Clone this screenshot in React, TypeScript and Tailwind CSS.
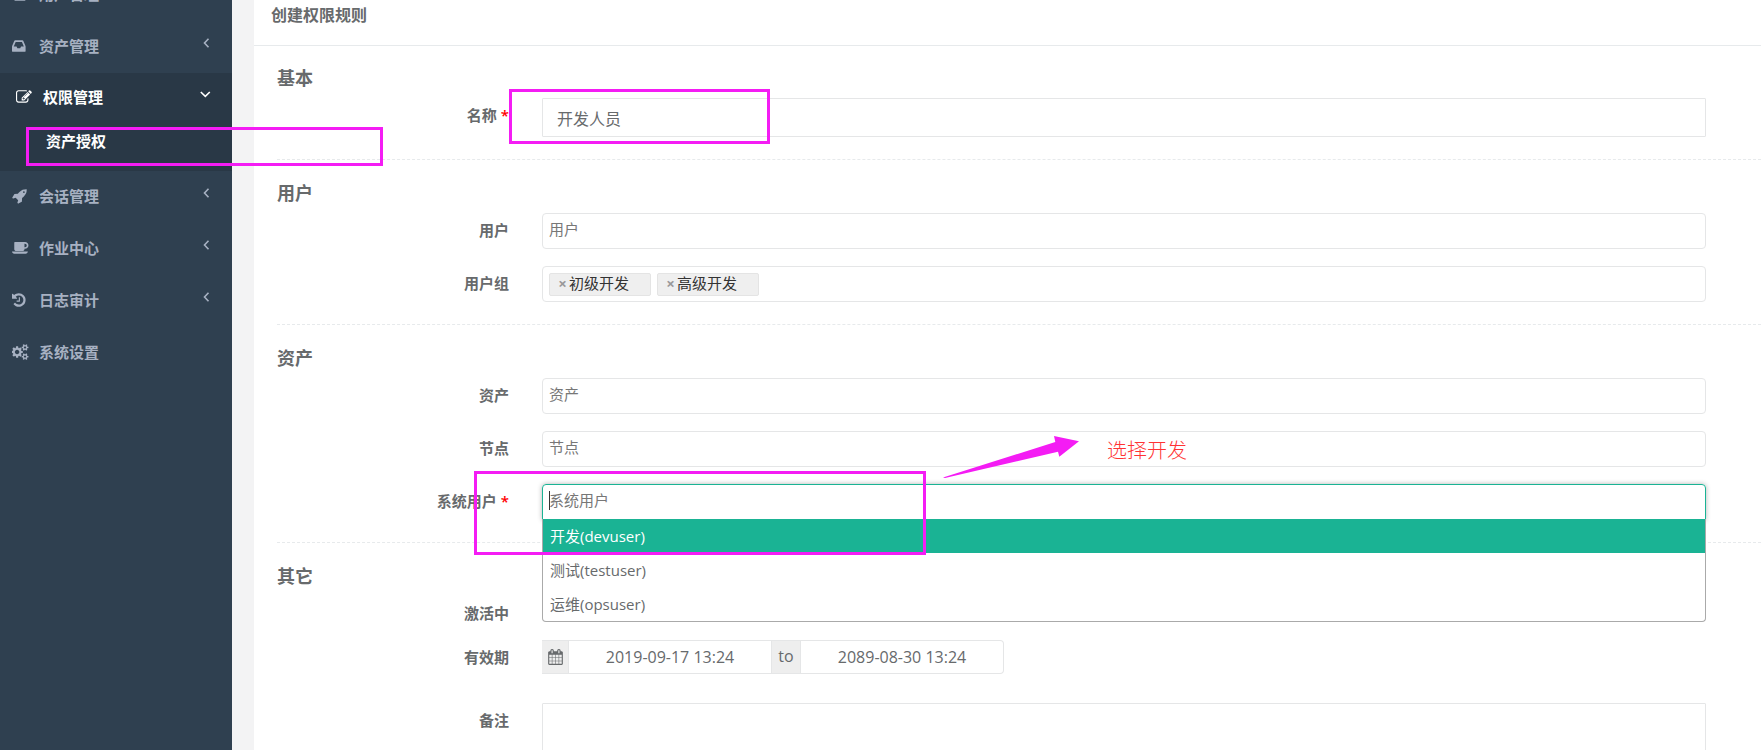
import type { ReactNode } from 'react';

const icons = {
  user: 'M1600 1405q0 120-73 189.500t-194 69.500h-874q-121 0-194-69.500t-73-189.500q0-53 3.500-103.500t14-109 26.500-108.500 43-97.500 62-81 85.500-53.500 111.500-20q9 0 42 21.500t74.500 48 108 48 133.500 21.500 133.500-21.500 108-48 74.500-48 42-21.500q61 0 111.500 20t85.500 53.500 62 81 43 97.500 26.500 108.500 14 109 3.500 103.500z',
  inbox: 'M1151 960h316q-1-3-2.500-8.500t-2.500-7.500l-212-496h-708l-212 496q-1 3-2.500 8.500t-2.500 7.500h316l95 192h320zm513 30v482q0 26-19 45t-45 19h-1408q-26 0-45-19t-19-45v-482q0-62 25-123l238-552q10-25 36.500-42t52.500-17h832q26 0 52.500 17t36.500 42l238 552q25 61 25 123z',
  edit: 'M888 1184l116-116-152-152-116 116v56h96v96h56zm440-720q-16-16-33 1l-350 350q-17 17-1 33t33-1l350-350q17-17 1-33zm80 594v190q0 119-84.500 203.500t-203.500 84.500h-832q-119 0-203.500-84.500t-84.500-203.500v-832q0-119 84.500-203.500t203.500-84.500h832q63 0 117 25 15 7 18 23 3 17-9 29l-49 49q-14 14-32 8-23-6-45-6h-832q-66 0-113 47t-47 113v832q0 66 47 113t113 47h832q66 0 113-47t47-113v-126q0-13 9-22l64-64q15-15 35-7t20 29zm-96-738l288 288-672 672h-288v-288zm444 132l-92 92-288-288 92-92q28-28 68-28t68 28l152 152q28 28 28 68t-28 68z',
  rocket: 'M1440 448q0-40-28-68t-68-28-68 28-28 68 28 68 68 28 68-28 28-68zm224-288q0 249-75.500 430.500t-253.500 360.500q-81 80-195 176l-20 379q-2 16-16 26l-384 224q-7 4-16 4-12 0-23-9l-64-64q-13-14-8-32l85-276-281-281-276 85q-3 1-9 1-14 0-23-9l-64-64q-17-19-5-39l224-384q10-14 26-16l379-20q96-114 176-195 188-187 358-258t431-71q14 0 24 9.500t10 22.500z',
  coffee: 'M1664 608q0-80-56-136t-136-56h-64v384h64q80 0 136-56t56-136zm-1664 672h1792q0 106-75 181t-181 75h-1280q-106 0-181-75t-75-181zm1856-672q0 159-112.500 271.500t-271.500 112.500h-64v32q0 92-66 158t-158 66h-704q-92 0-158-66t-66-158v-736q0-26 19-45t45-19h1152q159 0 271.500 112.500t112.500 271.500z',
  history: 'M1664 896q0 156-61 298t-164 245-245 164-298 61q-172 0-327-72.500t-264-204.500q-7-10-6.500-22.500t8.500-20.500l137-138q10-9 25-9 16 2 23 12 73 95 179 147t225 52q104 0 198.500-40.500t163.500-109.500 109.500-163.500 40.500-198.500-40.500-198.500-109.500-163.500-163.500-109.500-198.500-40.500q-98 0-188 35.500t-160 101.500l137 138q31 30 14 69-17 40-59 40h-448q-26 0-45-19t-19-45v-448q0-42 40-59 39-17 69 14l130 129q107-101 244.500-156.500t284.500-55.500q156 0 298 61t245 164 164 245 61 298zm-640-288v448q0 14-9 23t-23 9h-320q-14 0-23-9t-9-23v-64q0-14 9-23t23-9h224v-352q0-14 9-23t23-9h64q14 0 23 9t9 23z',
  cogs: 'M832 896q0-106-75-181t-181-75-181 75-75 181 75 181 181 75 181-75 75-181zm768 512q0-52-38-90t-90-38-90 38-38 90q0 53 37.500 90.500t90.500 37.500 90.500-37.500 37.500-90.500zm0-1024q0-52-38-90t-90-38-90 38-38 90q0 53 37.500 90.500t90.500 37.500 90.500-37.500 37.500-90.500zm-384 421v185q0 10-7 19.500t-16 10.500l-155 24q-11 35-32 76 34 48 90 115 7 11 7 20 0 12-7 19-23 30-82.500 89.500t-78.500 59.500q-11 0-21-7l-115-90q-37 19-77 31-11 108-23 155-7 24-30 24h-186q-11 0-20-7.500t-10-17.500l-23-153q-34-10-75-31l-118 89q-7 7-20 7-11 0-21-8-144-133-144-160 0-9 7-19 10-14 41-53t47-61q-23-44-35-82l-152-24q-10-1-17-9.500t-7-19.500v-185q0-10 7-19.500t16-10.500l155-24q11-35 32-76-34-48-90-115-7-11-7-20 0-12 7-20 22-30 82-89t79-59q11 0 21 7l115 90q34-18 77-32 11-108 23-154 7-24 30-24h186q11 0 20 7.500t10 17.500l23 153q34 10 75 31l118-89q8-7 20-7 11 0 21 8 144 133 144 160 0 8-7 19-12 16-42 54t-45 60q23 48 34 82l152 23q10 2 17 10.500t7 19.500zm640 533v140q0 16-149 31-12 27-30 52 51 113 51 138 0 4-4 7-122 71-124 71-8 0-46-47t-52-68q-20 2-30 2t-30-2q-14 21-52 68t-46 47q-2 0-124-71-4-3-4-7 0-25 51-138-18-25-30-52-149-15-149-31v-140q0-16 149-31 13-29 30-52-51-113-51-138 0-4 4-7 4-2 35-20t59-34 30-16q8 0 46 46.500t52 67.500q20-2 30-2t30 2q51-71 92-112l6-2q4 0 124 70 4 3 4 7 0 25-51 138 17 23 30 52 149 15 149 31zm0-1024v140q0 16-149 31-12 27-30 52 51 113 51 138 0 4-4 7-122 71-124 71-8 0-46-47t-52-68q-20 2-30 2t-30-2q-14 21-52 68t-46 47q-2 0-124-71-4-3-4-7 0-25 51-138-18-25-30-52-149-15-149-31v-140q0-16 149-31 13-29 30-52-51-113-51-138 0-4 4-7 4-2 35-20t59-34 30-16q8 0 46 46.500t52 67.500q20-2 30-2t30 2q51-71 92-112l6-2q4 0 124 70 4 3 4 7 0 25-51 138 17 23 30 52 149 15 149 31z',
  calendar: 'M192 1664h288v-288h-288v288zm352 0h320v-288h-320v288zm-352-352h288v-320h-288v320zm352 0h320v-320h-320v320zm-352-384h288v-288h-288v288zm736 736h320v-288h-320v288zm-384-736h320v-288h-320v288zm768 736h288v-288h-288v288zm-384-352h320v-320h-320v320zm-352-864v-288q0-13-9.500-22.500t-22.500-9.500h-64q-13 0-22.500 9.500t-9.500 22.500v288q0 13 9.500 22.500t22.500 9.500h64q13 0 22.500-9.500t9.500-22.500zm736 864h288v-320h-288v320zm-384-384h320v-288h-320v288zm384 0h288v-288h-288v288zm32-480v-288q0-13-9.500-22.500t-22.500-9.500h-64q-13 0-22.500 9.500t-9.500 22.500v288q0 13 9.500 22.500t22.500 9.500h64q13 0 22.500-9.500t9.500-22.500zm384-64v1280q0 52-38 90t-90 38h-1408q-52 0-90-38t-38-90v-1280q0-52 38-90t90-38h128v-96q0-66 47-113t113-47h64q66 0 113 47t47 113v96h384v-96q0-66 47-113t113-47h64q66 0 113 47t47 113v96h128q52 0 90 38t38 90z',
};

type IconName = keyof typeof icons;

// left bearing of the narrower glyphs
const bearings: Partial<Record<IconName, number>> = {
  inbox: 128,
  history: 128,
  calendar: -64,
};

function Icon({ name }: { name: IconName }) {
  return (
    <svg viewBox={`${bearings[name] ?? 0} 0 1920 1792`} fill="currentColor" className="h-4 w-[17px] shrink-0" aria-hidden="true">
      <path d={icons[name]} />
    </svg>
  );
}

function Chevron({ open }: { open?: boolean }) {
  return (
    <svg viewBox="0 0 12 12" fill="none" stroke="currentColor" strokeWidth="1.6" className="mb-[6px] ml-auto size-3" aria-hidden="true">
      <path d={open ? 'M.8 4 5.300 8.300 9.800 4' : 'M8.500 1.800 4.500 6l4 4.200'} />
    </svg>
  );
}

interface NavItemProps {
  icon: IconName;
  label: string;
  leaf?: boolean;
}

function NavItem({ icon, label, leaf }: NavItemProps) {
  return (
    <li>
      <a href="#" className="flex h-[52px] items-center pr-5 pb-[2px] pl-3">
        <Icon name={icon} />
        <span className="ml-[10px]">{label}</span>
        {!leaf && <Chevron />}
      </a>
    </li>
  );
}

function Sidebar() {
  return (
    <nav className="w-[232px] shrink-0 bg-[#2f4050] text-[15px] font-semibold text-[#a7b1c2]">
      {/* the menu is scrolled, its first entry is mostly out of view */}
      <ul className="-mt-[31px]">
        <NavItem icon="user" label="用户管理" />
        <NavItem icon="inbox" label="资产管理" />
        <li className="h-[98px] bg-[#293846] text-white">
          <a href="#" className="flex h-12 items-center pr-5 pl-4">
            <Icon name="edit" />
            <span className="ml-[10px]">权限管理</span>
            <Chevron open />
          </a>
          <a href="#" className="block pl-[46px] leading-10">资产授权</a>
        </li>
        <NavItem icon="rocket" label="会话管理" />
        <NavItem icon="coffee" label="作业中心" />
        <NavItem icon="history" label="日志审计" />
        <NavItem icon="cogs" label="系统设置" leaf />
      </ul>
    </nav>
  );
}

function Section({ title, first, children }: { title: string; first?: boolean; children: ReactNode }) {
  return (
    <section className={first ? 'pt-[21px]' : 'mt-[22px] border-t border-dashed border-[#e7eaec] pt-[22px]'}>
      <h3 className="mb-[9px] text-[18px] leading-[22px] font-semibold">{title}</h3>
      <div className="flex flex-col gap-[17px]">{children}</div>
    </section>
  );
}

interface RowProps {
  id: string;
  label: string;
  required?: boolean;
  children: ReactNode;
}

function Row({ id, label, required, children }: RowProps) {
  return (
    <div className="flex items-start">
      <label htmlFor={id} className="mr-[33px] w-[232px] shrink-0 pt-[7px] text-right text-[15px] leading-5 font-semibold">
        {label}
        {required && <span className="ml-1 text-[#ff0000]">*</span>}
      </label>
      <div className="relative mr-[55px] min-w-0 flex-1">{children}</div>
    </div>
  );
}

function SelectBox({ id, label }: { id: string; label: string }) {
  return (
    <Row id={id} label={label}>
      <input
        id={id}
        placeholder={label}
        className="block h-9 w-full rounded-[4px] border border-[#e5e6e7] px-[6px] pb-[5px] text-[15px] placeholder:text-[#777777]"
      />
    </Row>
  );
}

function Tag({ label }: { label: string }) {
  return (
    <span className="flex h-[23px] w-[102px] items-center rounded-[2px] border border-[#e4e4e4] bg-[#efefef] pb-[2px] pl-2 text-[15px] text-[#333333]">
      <button type="button" aria-label="移除" className="mr-[2px] w-[9px] font-bold text-[#999999]">×</button>
      {label}
    </span>
  );
}

function PermissionForm() {
  return (
    <form className="pl-[23px]">
      <Section title="基本" first>
        <Row id="name" label="名称" required>
          <input
            id="name"
            defaultValue="开发人员"
            className="block h-[39px] w-full rounded-[1px] border border-[#e5e6e7] px-[14px] text-base"
          />
        </Row>
      </Section>

      <Section title="用户">
        <SelectBox id="users" label="用户" />
        <Row id="groups" label="用户组">
          <div className="flex h-9 gap-[6px] rounded-[4px] border border-[#e5e6e7] px-[6px] pt-[6px]">
            <Tag label="初级开发" />
            <Tag label="高级开发" />
            <input id="groups" className="h-[23px] min-w-0 flex-1" />
          </div>
        </Row>
      </Section>

      <Section title="资产">
        <SelectBox id="assets" label="资产" />
        <SelectBox id="nodes" label="节点" />
        <Row id="system-users" label="系统用户" required>
          <input
            id="system-users"
            placeholder="系统用户"
            className="block h-9 w-full rounded-t-[4px] border border-[#1ab394] px-[6px] pb-[5px] text-[15px] shadow-[0_0_5px_rgba(0,0,0,0.3)] placeholder:text-[#777777]"
          />
          <span className="absolute top-[7px] left-[7px] h-[19px] w-px bg-[#333333]" />
          <ul className="absolute inset-x-0 top-[35px] z-10 rounded-b-[4px] border border-t-0 border-[#aaaaaa] bg-white text-[15px] leading-[34px]">
            <li className="bg-[#1ab394] px-[7px] text-white">开发(devuser)</li>
            <li className="px-[7px]">测试(testuser)</li>
            <li className="px-[7px]">运维(opsuser)</li>
          </ul>
        </Row>
      </Section>

      <Section title="其它">
        <Row id="active" label="激活中">
          <input id="active" type="checkbox" defaultChecked className="mt-[7px] block" />
        </Row>
        <Row id="date-start" label="有效期">
          <div className="flex h-[34px] w-[462px] overflow-hidden rounded-r-[4px] border border-l-0 border-[#e5e6e7] text-base">
            <span className="flex w-[27px] items-center justify-center border-r border-[#e5e6e7] bg-[#eeeeee]">
              <Icon name="calendar" />
            </span>
            <input id="date-start" defaultValue="2019-09-17 13:24" className="min-w-0 flex-1 text-center" />
            <span className="w-[30px] border-x border-[#e5e6e7] bg-[#eeeeee] text-center leading-[30px]">to</span>
            <input aria-label="结束日期" defaultValue="2089-08-30 13:24" className="min-w-0 flex-1 text-center" />
          </div>
        </Row>
        <div className="pt-3">
          <Row id="comment" label="备注">
            <textarea id="comment" className="block h-24 w-full resize-none rounded-[1px] border border-[#e5e6e7] px-[14px]" />
          </Row>
        </div>
      </Section>
    </form>
  );
}

// hand-drawn marks that lie over the page
function Annotations() {
  return (
    <div className="pointer-events-none absolute inset-0 z-20">
      <div className="absolute top-[127px] left-[26px] h-[39px] w-[357px] border-3 border-[#f41cf4]" />
      <div className="absolute top-[89px] left-[509px] h-[55px] w-[261px] border-3 border-[#f41cf4]" />
      <div className="absolute top-[471px] left-[474px] h-[84px] w-[452px] border-3 border-[#f41cf4]" />
      <svg viewBox="0 0 136 43" className="absolute top-[436px] left-[943px] h-[43px] w-[136px]" fill="#f41cf4" aria-hidden="true">
        <path d="M0 41.500 112.300 6 111 0 136 5.200 116.300 20.700 115 15.700 2 42Z" />
      </svg>
      <p className="absolute top-[436px] left-[1107px] text-[20px] leading-[30px] font-light text-[#ff3333]">选择开发</p>
    </div>
  );
}

export default function App() {
  return (
    <div className="relative flex h-screen overflow-hidden bg-[#f3f3f4] font-['Open_Sans','Noto_Sans_CJK_SC',sans-serif] text-[#676a6c]">
      <Sidebar />

      <main className="ml-[22px] min-w-0 flex-1 bg-white">
        <header className="h-[46px] border-b border-[#e7eaec] pl-[17px]">
          <h2 className="text-base leading-[30px] font-semibold">创建权限规则</h2>
        </header>
        <PermissionForm />
      </main>

      <Annotations />
    </div>
  );
}
